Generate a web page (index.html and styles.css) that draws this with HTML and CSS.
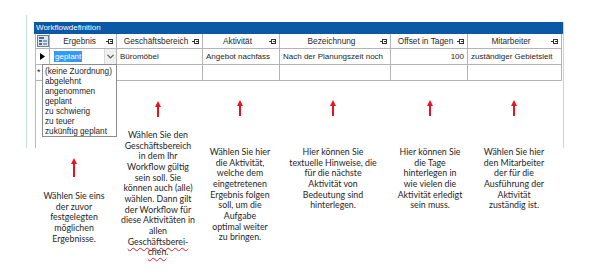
FILE: index.html
```html
<!DOCTYPE html>
<html lang="de">
<head>
    <meta charset="UTF-8">
    <meta name="viewport" content="width=device-width, initial-scale=1.0">
    <title>Workflowdefinition</title>
    <link rel="stylesheet" href="styles.css">
</head>
<body>
    <div class="page">
        <div class="frame">
            <div class="panel">
                <div class="caption">Workflowdefinition</div>
                <div class="grid-area">
                    <div class="grid">
                        <div class="cell head sel">
                            <svg width="12" height="12" viewBox="0 0 12 12">
                                <rect x="0.5" y="0.5" width="11" height="11" fill="#dfe6f0" stroke="#6b7f99"/>
                                <rect x="2" y="2" width="5" height="2" fill="#4a6a96"/>
                                <rect x="2" y="5" width="3" height="2" fill="#4a6a96"/>
                                <rect x="6" y="5" width="4" height="2" fill="#8aa0bd"/>
                                <rect x="2" y="8" width="3" height="2" fill="#4a6a96"/>
                                <rect x="6" y="8" width="4" height="2" fill="#8aa0bd"/>
                            </svg>
                        </div>
                        <div class="cell head">Ergebnis<span class="pin"></span></div>
                        <div class="cell head">Geschäftsbereich<span class="pin"></span></div>
                        <div class="cell head">Aktivität<span class="pin"></span></div>
                        <div class="cell head">Bezeichnung<span class="pin"></span></div>
                        <div class="cell head">Offset in Tagen<span class="pin"></span></div>
                        <div class="cell head">Mitarbeiter<span class="pin"></span></div>

                        <div class="cell sel">
                            <svg width="5" height="7" viewBox="0 0 5 7"><path d="M0 0 L5 3.5 L0 7 Z" fill="#000"/></svg>
                        </div>
                        <div class="cell combo">
                            <span class="combo-text"><span class="selected">geplant</span></span>
                            <span class="combo-btn">
                                <svg width="7" height="5" viewBox="0 0 7 5"><path d="M0.5 0.8 L3.5 3.8 L6.5 0.8" fill="none" stroke="#555" stroke-width="1.2"/></svg>
                            </span>
                            <ul class="dropdown">
                                <li>(keine Zuordnung)</li>
                                <li>abgelehnt</li>
                                <li>angenommen</li>
                                <li>geplant</li>
                                <li>zu schwierig</li>
                                <li>zu teuer</li>
                                <li>zukünftig geplant</li>
                            </ul>
                        </div>
                        <div class="cell">Büromöbel</div>
                        <div class="cell">Angebot nachfass</div>
                        <div class="cell">Nach der Planungszeit noch</div>
                        <div class="cell num">100</div>
                        <div class="cell">zuständiger Gebietsleit</div>

                        <div class="cell sel star">*</div>
                        <div class="cell"></div>
                        <div class="cell"></div>
                        <div class="cell"></div>
                        <div class="cell"></div>
                        <div class="cell"></div>
                        <div class="cell"></div>
                    </div>
                </div>
            </div>
        </div>

        <div class="notes">
            <div class="note n1">
                <div class="arrow"></div>
                <p>Wählen Sie eins<br>der zuvor<br>festgelegten<br>möglichen<br>Ergebnisse.</p>
            </div>
            <div class="note n2">
                <div class="arrow"></div>
                <p>Wählen Sie den<br>Geschäftsbereich<br>in dem Ihr<br>Workflow gültig<br>sein soll. Sie<br>können auch (alle)<br>wählen. Dann gilt<br>der Workflow für<br>diese Aktivitäten in<br>allen<br><span class="typo">Geschäftsberei-</span><br><span class="typo">chen</span>.</p>
            </div>
            <div class="note n3">
                <div class="arrow"></div>
                <p>Wählen Sie hier<br>die Aktivität,<br>welche dem<br>eingetretenen<br>Ergebnis folgen<br>soll, um die<br>Aufgabe<br>optimal weiter<br>zu bringen.</p>
            </div>
            <div class="note n4">
                <div class="arrow"></div>
                <p>Hier können Sie<br>textuelle Hinweise, die<br>für die nächste<br>Aktivität von<br>Bedeutung sind<br>hinterlegen.</p>
            </div>
            <div class="note n5">
                <div class="arrow"></div>
                <p>Hier können Sie<br>die Tage<br>hinterlegen in<br>wie vielen die<br>Aktivität erledigt<br>sein muss.</p>
            </div>
            <div class="note n6">
                <div class="arrow"></div>
                <p>Wählen Sie hier<br>den Mitarbeiter<br>der für die<br>Ausführung der<br>Aktivität<br>zuständig ist.</p>
            </div>
        </div>
    </div>
</body>
</html>
```

FILE: styles.css
```css
*{
    margin: 0;
    padding: 0;
    box-sizing: border-box;
}
body{
    background: #fff;
    width: 600px;
    height: 273px;
    overflow: hidden;
}
.page{
    position: relative;
    width: 600px;
    height: 273px;
    padding: 15px 0 0 26px;
    font-family: "Liberation Sans", Arial, sans-serif;
    font-size: 8px;
    color: #1e1e1e;
}
.frame{
    width: 537px;
    height: 133px;
    border-left: 1px solid #c9d8ec;
    padding: 7px 0 0 7px;
}
.panel{
    display: flex;
    flex-direction: column;
    width: 530px;
    height: 126px;
    border-right: 1px solid #c2d4ec;
}
.caption{
    height: 12px;
    line-height: 12px;
    padding-left: 2px;
    background: #0a58a6;
    color: #fff;
}
.grid-area{
    flex: 1;
    margin-left: 1px;
    border-left: 1px solid #b8b8b8;
}
.grid{
    display: grid;
    grid-template-columns: 14px 67px 86px 77px 111px 77px 94px;
    grid-template-rows: 15px 16px 16px;
}
.cell{
    position: relative;
    display: flex;
    align-items: center;
    padding: 0 3px;
    border-right: 1px solid #b4b4b4;
    border-bottom: 1px solid #b4b4b4;
    white-space: nowrap;
    overflow: visible;
}
.head{
    justify-content: center;
    padding-right: 10px;
    font-size: 8.3px;
    color: #2a2a2a;
}
.head.sel{
    padding: 0;
}
.sel{
    justify-content: center;
    padding: 0;
}
.star{
    justify-content: flex-start;
    padding-left: 1px;
    font-size: 9px;
    align-items: flex-start;
    padding-top: 2px;
}
.pin{
    position: absolute;
    right: 3px;
    top: 5px;
    width: 5px;
    height: 5px;
    border: 1px solid #333;
}
.pin::before{
    content: "";
    position: absolute;
    left: -3px;
    top: 1px;
    width: 2px;
    height: 1px;
    background: #333;
}
.pin::after{
    content: "";
    position: absolute;
    left: 1px;
    top: 1px;
    width: 2px;
    height: 1px;
    background: #333;
}
.num{
    justify-content: flex-end;
}
.combo{
    padding: 0 0 0 4px;
}
.combo-text{
    flex: 1;
}
.selected{
    background: #3399ff;
    color: #fff;
    padding: 1px;
}
.combo-btn{
    display: flex;
    align-items: center;
    justify-content: center;
    width: 12px;
    height: 15px;
    background: #f0f0f0;
    border-left: 1px solid #d8d8d8;
}
.dropdown{
    position: absolute;
    left: -8px;
    top: 15px;
    width: 75px;
    height: 73px;
    list-style: none;
    background: #fff;
    border: 1px solid #8c8c8c;
    padding: 2px 0 0 2px;
    z-index: 2;
    font-size: 8.2px;
}
.dropdown li{
    height: 10px;
    line-height: 10px;
}
.notes{
    position: absolute;
    left: 34px;
    top: 0;
    display: flex;
    font-family: Lato, "Open Sans", sans-serif;
    font-size: 8.8px;
    line-height: 10.65px;
    color: #262626;
}
.note{
    display: flex;
    flex-direction: column;
    align-items: center;
    text-align: center;
    white-space: nowrap;
}
.arrow{
    position: relative;
    width: 2px;
    background: #e8141b;
}
.arrow::before{
    content: "";
    position: absolute;
    left: -2px;
    top: -5px;
    border-left: 3px solid transparent;
    border-right: 3px solid transparent;
    border-bottom: 6px solid #e8141b;
}
.n1{ width: 80px; }
.n2{ width: 88px; }
.n3{ width: 76px; }
.n4{ width: 110px; }
.n5{ width: 84px; }
.n6{ width: 84px; }
.n1 .arrow{ margin-top: 163px; height: 14px; }
.n1 p{ margin-top: 14px; }
.n2 .arrow{ margin-top: 106px; height: 11px; }
.n2 p{ margin-top: 13px; }
.n3 .arrow,.n4 .arrow,.n5 .arrow,.n6 .arrow{ margin-top: 105px; height: 11px; }
.n3 p{ margin-top: 31px; }
.n4 p,.n5 p,.n6 p{ margin-top: 31px; }
.typo{
    text-decoration: underline wavy #e0202a;
    text-decoration-thickness: 1px;
    text-underline-offset: 2px;
}
```
